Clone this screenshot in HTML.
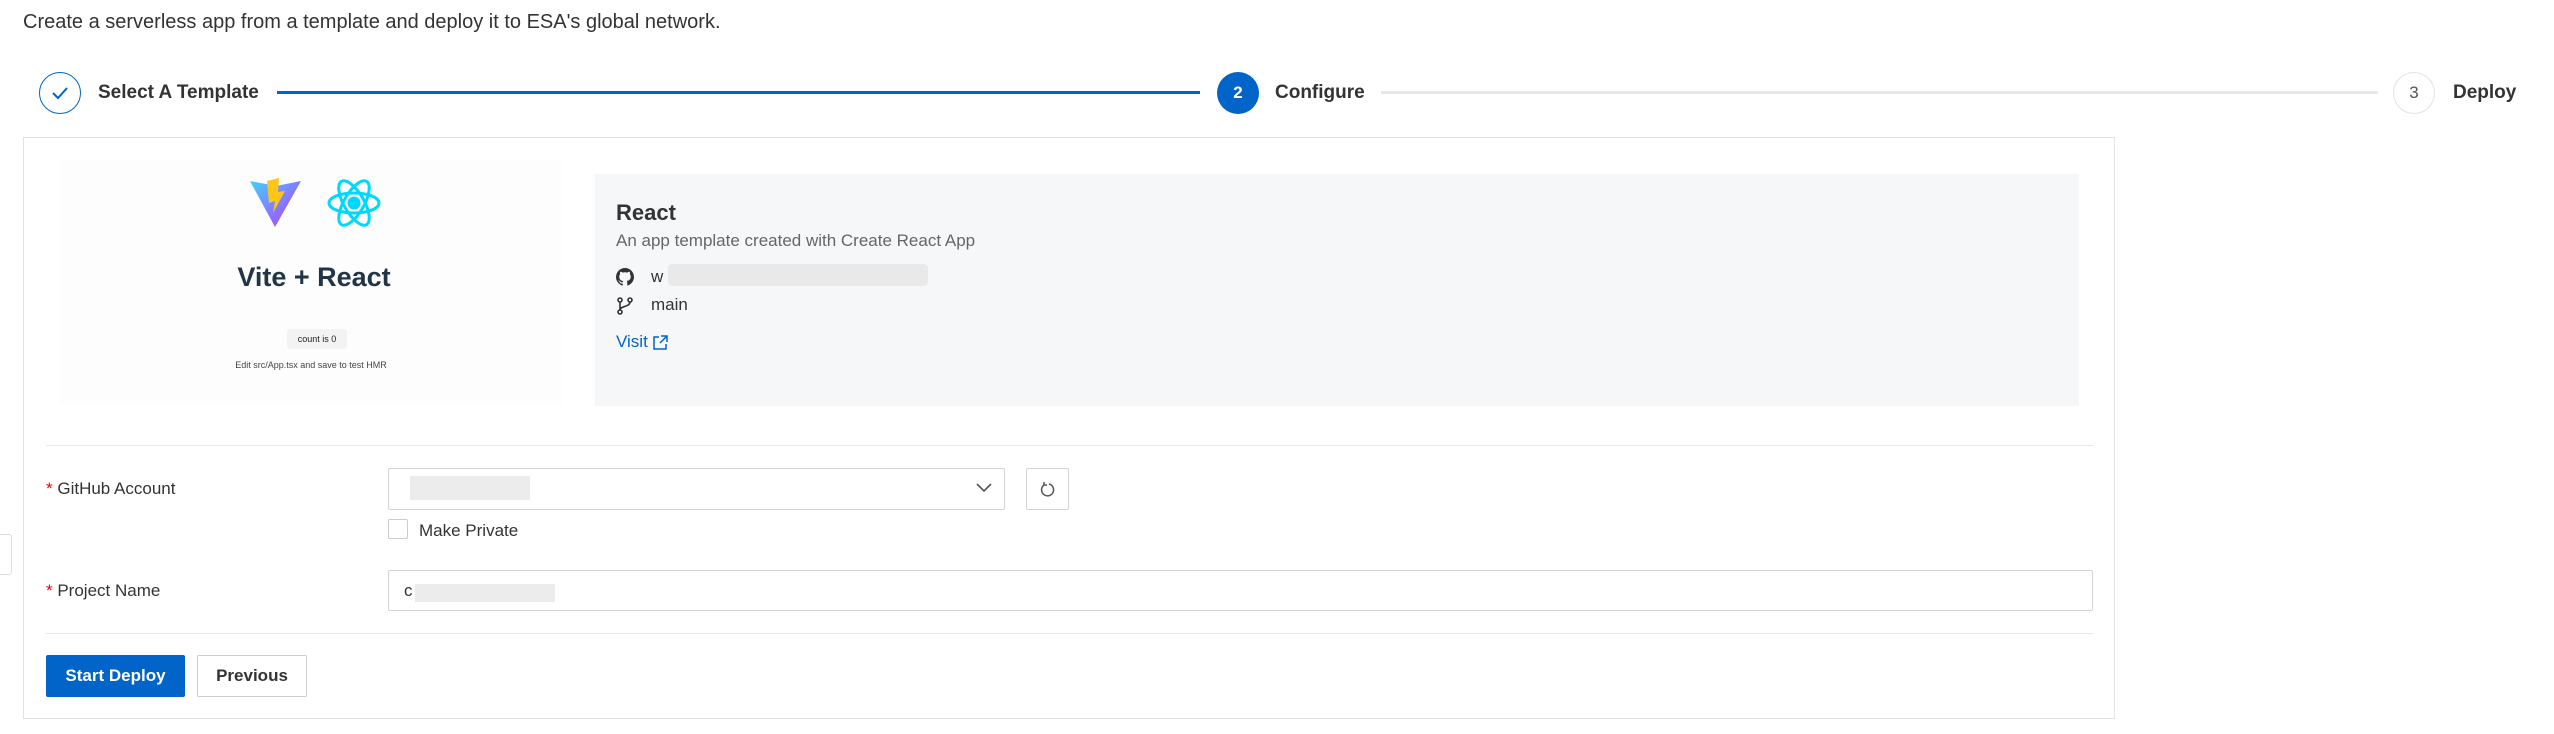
<!DOCTYPE html>
<html><head><meta charset="utf-8"><style>
*{box-sizing:border-box;margin:0;padding:0}
body{width:2554px;height:734px;background:#fff;font-family:"Liberation Sans",Arial,sans-serif;color:#333;position:relative;overflow:hidden}
.a{position:absolute}
.t{font-size:20px;color:#333;white-space:nowrap}
.circ{position:absolute;width:42px;height:42px;border-radius:50%;display:flex;align-items:center;justify-content:center;font-size:17px}
.b{font-weight:bold}
</style></head><body>
<div class="a t" style="left:23px;top:11px;font-size:20px">Create a serverless app from a template and deploy it to ESA's global network.</div>

<div class="circ" style="left:39px;top:72px;border:1.5px solid #0064c8">
<svg width="18" height="14" viewBox="0 0 18 14"><path d="M2 7l5 5 9-10" fill="none" stroke="#0064c8" stroke-width="2"/></svg></div>
<div class="a t b" style="left:98px;top:82px;font-size:19px">Select A Template</div>
<div class="a" style="left:277px;top:91px;width:923px;height:3px;background:#0064c8"></div>
<div class="circ b" style="left:1217px;top:72px;background:#0064c8;color:#fff">2</div>
<div class="a t b" style="left:1275px;top:82px;font-size:19px">Configure</div>
<div class="a" style="left:1381px;top:91px;width:997px;height:3px;background:#e8e8e8"></div>
<div class="circ" style="left:2393px;top:72px;border:1.5px solid #e3e3e3;color:#555">3</div>
<div class="a t b" style="left:2453px;top:82px;font-size:19px">Deploy</div>

<div class="a" style="left:23px;top:137px;width:2092px;height:582px;border:1.5px solid #e3e3e3"></div>
<div class="a" style="left:60px;top:160px;width:502px;height:244px;background:#fdfdfd"></div>
<svg class="a" style="left:249px;top:177px" width="54" height="54" viewBox="0 0 54 54">
<defs><linearGradient id="g" x1="0" y1="0" x2="1" y2="1"><stop offset="0" stop-color="#41d1ff"/><stop offset="1" stop-color="#bd34fe"/></linearGradient></defs>
<path d="M1 4l25 46L52 4 27 9z" fill="url(#g)"/><path d="M30 1L18 4l2 22 6-2-2 12 12-22-7 1z" fill="#ffc517"/></svg>
<svg class="a" style="left:326px;top:174px" width="56" height="58" viewBox="-28 -29 56 58" fill="none" stroke="#00d8ff" stroke-width="3">
<circle r="5" fill="#00d8ff"/><ellipse rx="25" ry="10"/><ellipse rx="25" ry="10" transform="rotate(60)"/><ellipse rx="25" ry="10" transform="rotate(120)"/></svg>
<div class="a b" style="left:63px;top:262px;width:502px;text-align:center;font-size:27px;color:#213547">Vite + React</div>
<div class="a" style="left:287px;top:329px;width:60px;height:20px;background:#f3f3f3;border-radius:3px;font-size:9px;text-align:center;line-height:20px;color:#222">count is 0</div>
<div class="a" style="left:60px;top:360px;width:502px;text-align:center;font-size:9px;color:#444">Edit src/App.tsx and save to test HMR</div>

<div class="a" style="left:595px;top:174px;width:1484px;height:232px;background:#f6f7f9"></div>
<div class="a t b" style="left:616px;top:200px;font-size:22px">React</div>
<div class="a t" style="left:616px;top:231px;font-size:17px;color:#666">An app template created with Create React App</div>
<svg class="a" style="left:616px;top:268px" width="18" height="18" viewBox="0 0 16 16"><path fill="#333" d="M8 0C3.6 0 0 3.6 0 8c0 3.5 2.3 6.5 5.5 7.6.4.1.5-.2.5-.4v-1.4c-2.2.5-2.7-1-2.7-1-.4-.9-.9-1.2-.9-1.2-.7-.5.1-.5.1-.5.8.1 1.2.8 1.2.8.7 1.2 1.9.9 2.3.7.1-.5.3-.9.5-1.100-1.8-.2-3.6-.9-3.6-4 0-.9.3-1.6.8-2.1-.1-.2-.4-1 .1-2.1 0 0 .7-.2 2.2.8a7.5 7.5 0 014 0c1.5-1 2.2-.8 2.2-.8.4 1.1.2 1.9.1 2.1.5.6.8 1.3.8 2.1 0 3.1-1.9 3.7-3.6 3.9.3.3.5.8.5 1.5v2.2c0 .2.1.5.6.4A8 8 0 0016 8c0-4.4-3.6-8-8-8z"/></svg>
<div class="a t" style="left:651px;top:267px;font-size:17px">w</div>
<div class="a" style="left:668px;top:264px;width:260px;height:22px;background:#e9e9e9;border-radius:4px"></div>
<svg class="a" style="left:616px;top:296px" width="18" height="20" viewBox="0 0 18 20" fill="none" stroke="#333" stroke-width="1.6"><circle cx="4" cy="4" r="2"/><circle cx="4" cy="16" r="2"/><circle cx="14" cy="4" r="2"/><path d="M4 6v8M14 6c0 5-10 4-10 8"/></svg>
<div class="a t" style="left:651px;top:295px;font-size:17px">main</div>
<div class="a t" style="left:616px;top:332px;font-size:17px;color:#0064c8">Visit</div>
<svg class="a" style="left:653px;top:335px" width="15" height="15" viewBox="0 0 15 15" fill="none" stroke="#0064c8" stroke-width="1.5"><path d="M6 2H1v12h12V9M8 1h6v6M14 1L7 8"/></svg>

<div class="a" style="left:46px;top:445px;width:2047px;height:1px;background:#e8e8e8"></div>
<div class="a t" style="left:46px;top:479px;font-size:17px"><span style="color:#e00">*</span> GitHub Account</div>
<div class="a" style="left:388px;top:468px;width:617px;height:42px;border:1.5px solid #d4d4d4;border-radius:2px"></div>
<div class="a" style="left:410px;top:476px;width:120px;height:24px;background:#ececec"></div>
<svg class="a" style="left:976px;top:482px" width="16" height="12" viewBox="0 0 16 12"><path d="M1 2l7 7 7-7" fill="none" stroke="#555" stroke-width="1.6"/></svg>
<div class="a" style="left:1026px;top:468px;width:43px;height:42px;border:1.5px solid #d4d4d4;border-radius:2px"></div>
<svg class="a" style="left:1039px;top:480px" width="16" height="18" viewBox="0 0 16 18" fill="none" stroke="#555" stroke-width="1.5"><path d="M10 4a6 6 0 11-5 1M5 2v3h3"/></svg>
<div class="a" style="left:388px;top:519px;width:20px;height:20px;border:1.5px solid #ccc;border-radius:2px"></div>
<div class="a t" style="left:419px;top:521px;font-size:17px">Make Private</div>

<div class="a t" style="left:46px;top:581px;font-size:17px"><span style="color:#e00">*</span> Project Name</div>
<div class="a" style="left:388px;top:570px;width:1705px;height:41px;border:1.5px solid #d4d4d4;border-radius:2px"></div>
<div class="a t" style="left:404px;top:581px;font-size:17px">c</div>
<div class="a" style="left:415px;top:584px;width:140px;height:18px;background:#ececec"></div>

<div class="a" style="left:46px;top:633px;width:2047px;height:1px;background:#e8e8e8"></div>
<div class="a b" style="left:46px;top:655px;width:139px;height:42px;background:#0064c8;color:#fff;font-size:17px;text-align:center;line-height:42px;border-radius:2px">Start Deploy</div>
<div class="a b" style="left:197px;top:655px;width:110px;height:42px;border:1.5px solid #ccc;color:#333;font-size:17px;text-align:center;line-height:40px;border-radius:2px">Previous</div>
<div class="a" style="left:-2px;top:534px;width:14px;height:41px;border:1.5px solid #ddd;background:#fff;border-radius:0 3px 3px 0"></div>
</body></html>
